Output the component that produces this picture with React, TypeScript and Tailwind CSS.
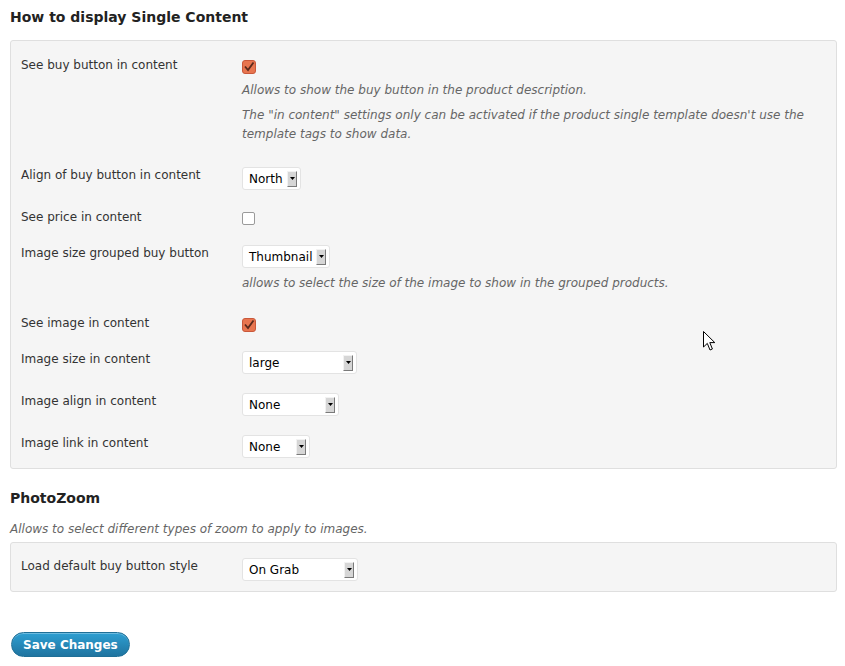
import React from 'react';

const Arrow = () => (
  <div className="w-[10px] h-[16px] bg-[#d6d6d6] border-t border-l border-t-[#f2f2f2] border-l-[#f2f2f2] border-r border-b border-r-[#7a7a7a] border-b-[#7a7a7a] flex items-center justify-center">
    <svg width="5" height="3" viewBox="0 0 5 3">
      <path d="M0 0 L5 0 L2.5 3 Z" fill="#000" />
    </svg>
  </div>
);

const Select: React.FC<{ value: string; width: string }> = ({ value, width }) => (
  <div className={`${width} h-[23px] bg-white border border-[#e3e3e3] rounded-[3px] flex items-center justify-between pl-[6px] pr-[3px] text-[12px] text-black`}>
    <span>{value}</span>
    <Arrow />
  </div>
);

const Check: React.FC<{ checked?: boolean }> = ({ checked }) =>
  checked ? (
    <svg width="14" height="14" viewBox="0 0 14 14" className="block">
      <rect x="0.5" y="0.5" width="13" height="13" rx="2.5" fill="#e8754f" stroke="#c9583a" />
      <path d="M3 6.5 L6 10 L11.5 2.5" fill="none" stroke="#5a2a1c" strokeWidth="1.8" />
    </svg>
  ) : (
    <div className="w-[13px] h-[13px] bg-white border border-[#9a9a9a] rounded-[2px]" />
  );

const Row: React.FC<{ label: string; children: React.ReactNode }> = ({ label, children }) => (
  <div className="flex">
    <div className="w-[231px] shrink-0 pl-[10px] pt-[7px] leading-[18px] text-[#333]">{label}</div>
    <div className="flex-1">{children}</div>
  </div>
);

const Desc: React.FC<{ children: React.ReactNode; className?: string }> = ({ children, className }) => (
  <p className={`italic text-[#666] leading-[19px] ${className ?? ''}`}>{children}</p>
);

export default function App() {
  return (
    <div className="relative w-[845px] h-[666px] bg-white px-[10px] text-[12px] overflow-hidden" style={{ fontFamily: '"DejaVu Sans", sans-serif' }}>
      <h3 className="mt-[8px] mb-[14px] text-[14px] font-bold leading-[18px] text-[#222]">How to display Single Content</h3>

      <div className="w-[827px] bg-[#f5f5f5] border border-[#dfdfdf] rounded-[3px] pt-[8px]">
        <Row label="See buy button in content">
          <div className="pt-[11px] pb-[15px]">
            <Check checked />
            <Desc className="mt-[7px]">Allows to show the buy button in the product description.</Desc>
            <Desc className="mt-[6px] pr-[20px]">
              The "in content" settings only can be activated if the product single template doesn't use the template tags to show data.
            </Desc>
          </div>
        </Row>
        <Row label="Align of buy button in content">
          <div className="pt-[8px] pb-[11px]">
            <Select value="North" width="w-[59px]" />
          </div>
        </Row>
        <Row label="See price in content">
          <div className="pt-[11px] pb-[12px]">
            <Check />
          </div>
        </Row>
        <Row label="Image size grouped buy button">
          <div className="pt-[8px] pb-[14px]">
            <Select value="Thumbnail" width="w-[88px]" />
            <Desc className="mt-[6px]">allows to select the size of the image to show in the grouped products.</Desc>
          </div>
        </Row>
        <Row label="See image in content">
          <div className="pt-[11px] pb-[11px]">
            <Check checked />
          </div>
        </Row>
        <Row label="Image size in content">
          <div className="pt-[8px] pb-[11px]">
            <Select value="large" width="w-[115px]" />
          </div>
        </Row>
        <Row label="Image align in content">
          <div className="pt-[8px] pb-[11px]">
            <Select value="None" width="w-[97px]" />
          </div>
        </Row>
        <Row label="Image link in content">
          <div className="pt-[8px] pb-[10px]">
            <Select value="None" width="w-[68px]" />
          </div>
        </Row>
      </div>

      <h3 className="mt-[20px] text-[14px] font-bold leading-[18px] text-[#222]">PhotoZoom</h3>
      <Desc className="mt-[13px] leading-[18px]">Allows to select different types of zoom to apply to images.</Desc>

      <div className="mt-[3px] w-[827px] bg-[#f5f5f5] border border-[#dfdfdf] rounded-[3px] pt-[7px]">
        <Row label="Load default buy button style">
          <div className="pt-[8px] pb-[10px]">
            <Select value="On Grab" width="w-[116px]" />
          </div>
        </Row>
      </div>

      <button className="mt-[40px] ml-[1px] h-[25px] px-[11px] rounded-full border border-[#1f6f97] bg-gradient-to-b from-[#2e9fd2] to-[#1f74a0] text-white font-bold text-[12px] shadow-[inset_0_1px_0_rgba(255,255,255,0.3)]">
        Save Changes
      </button>

      <svg className="absolute left-[703px] top-[331px]" width="13" height="21" viewBox="0 0 13 21">
        <path d="M0.5 0.5 L0.5 16 L4.3 12.4 L7 19 L9.4 18 L6.8 11.6 L11.8 11.6 Z" fill="#fff" stroke="#000" strokeWidth="1" strokeLinejoin="round" />
      </svg>
    </div>
  );
}
